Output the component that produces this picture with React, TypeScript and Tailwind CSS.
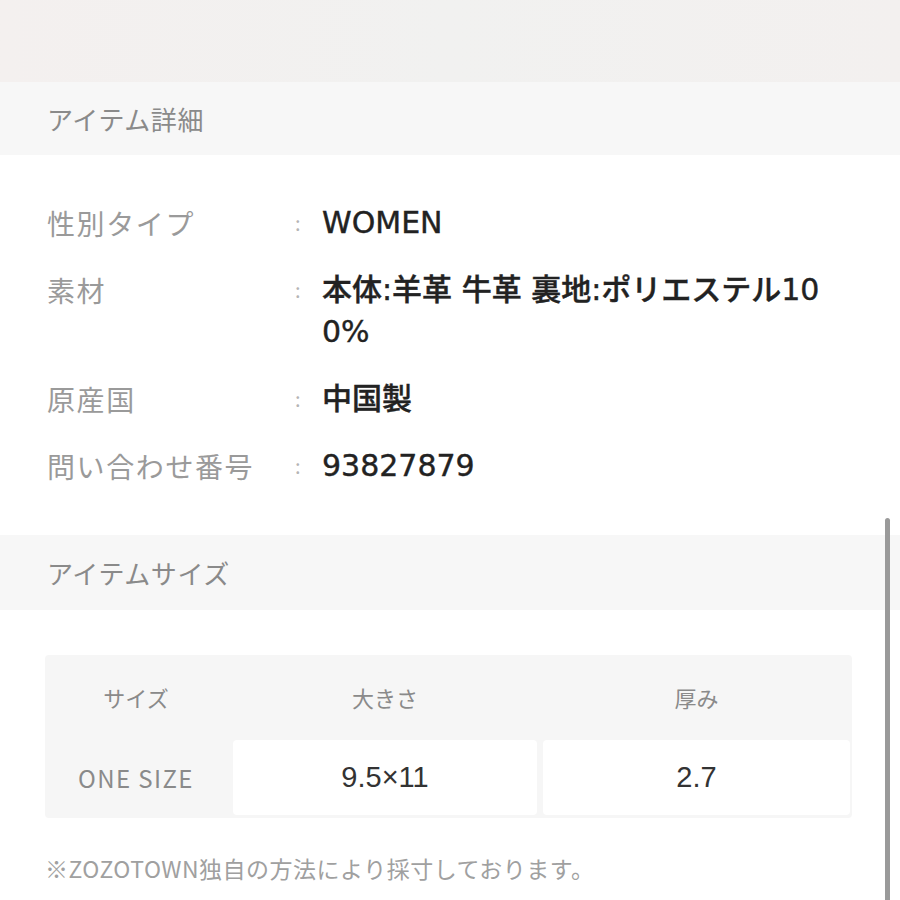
import React from "react";

interface DetailRow {
  label: string;
  value: string[];
}

const details: DetailRow[] = [
  { label: "性別タイプ", value: ["WOMEN"] },
  { label: "素材", value: ["本体:羊革 牛革 裏地:ポリエステル10", "0%"] },
  { label: "原産国", value: ["中国製"] },
  { label: "問い合わせ番号", value: ["93827879"] },
];

const SectionHeader: React.FC<{ title: string; height: string }> = ({ title, height }) => (
  <div
    className={`flex items-center bg-[#f7f7f7] px-[47px] text-[26px] tracking-[0.6px] text-[#8a8a8a] ${height}`}
  >
    {title}
  </div>
);

const App: React.FC = () => {
  return (
    <div
      className="relative w-[900px] h-[900px] overflow-hidden bg-white"
      style={{ fontFamily: '"Noto Sans CJK JP", "Noto Sans", sans-serif' }}
    >
      {/* faded product image edge */}
      <div className="h-[82px] bg-gradient-to-r from-[#f4f0ef] via-[#f1f1f0] to-[#f3f0ef]" />

      <SectionHeader title="アイテム詳細" height="h-[73px]" />

      <div className="flex flex-col gap-[25px] px-[47px] pt-[47px] pb-[48px]">
        {details.map((row) => (
          <div key={row.label} className="flex">
            <div className="w-[248px] shrink-0 text-[28px] leading-[42px] tracking-[1.6px] text-[#9a9a9a]">
              {row.label}
            </div>
            <div className="w-[27px] shrink-0 text-[20px] leading-[42px] text-[#b5b5b5]">:</div>
            <div
              className="text-[30px] font-medium leading-[42px] text-[#222] [-webkit-text-stroke:0.4px_#222]"
              style={{ fontFamily: '"DejaVu Sans", "Noto Sans CJK JP", sans-serif' }}
            >
              {row.value.map((line) => (
                <div key={line}>{line}</div>
              ))}
            </div>
          </div>
        ))}
      </div>

      <SectionHeader title="アイテムサイズ" height="h-[75px]" />

      <div className="pl-[45px] pr-[48px] pt-[45px]">
        <div className="rounded bg-[#f6f6f6] pr-[2px] pb-[3px]">
          <div className="grid grid-cols-[182px_304px_1fr] gap-x-[6px] h-[85px] items-center text-center text-[22px] text-[#8a8a8a]">
            <div>サイズ</div>
            <div>大きさ</div>
            <div>厚み</div>
          </div>
          <div className="grid grid-cols-[182px_304px_1fr] gap-x-[6px] h-[75px]">
            <div className="flex items-center justify-center text-[24px] tracking-[1.4px] text-[#8a8a8a]">
              ONE SIZE
            </div>
            <div
              className="flex items-center justify-center rounded-sm bg-white text-[29px] text-[#333]"
              style={{ fontFamily: '"Liberation Sans", sans-serif' }}
            >
              9.5×11
            </div>
            <div
              className="flex items-center justify-center rounded-sm bg-white text-[29px] text-[#333]"
              style={{ fontFamily: '"Liberation Sans", sans-serif' }}
            >
              2.7
            </div>
          </div>
        </div>
        <div className="mt-[35px] text-[23px] leading-[30px] tracking-[0.5px] text-[#a0a0a0]">
          ※ZOZOTOWN独自の方法により採寸しております。
        </div>
      </div>

      {/* scrollbar thumb overlay */}
      <div className="absolute right-[10px] top-[518px] h-[400px] w-[5px] rounded-full bg-[#9a9a9a]" />
    </div>
  );
};

export default App;
